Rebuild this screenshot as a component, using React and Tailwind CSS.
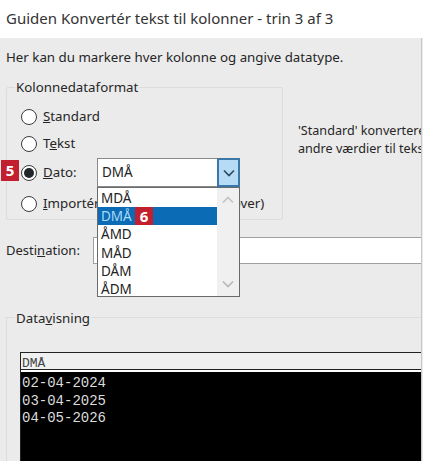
import React from 'react';

const Radio = ({ checked = false }) => (
  <div className="w-[16px] h-[16px] rounded-full border border-[#3a3a3a] bg-white flex items-center justify-center shrink-0">
    {checked && <div className="w-[10px] h-[10px] rounded-full bg-[#22262a]" />}
  </div>
);

const Badge = ({ children, className = '' }) => (
  <div className={`absolute w-[18px] bg-[#c3202f] text-white font-bold text-[15px] text-center ${className}`}>
    {children}
  </div>
);

const Chevron = ({ up = false, color = '#b4b4b4', size = 14 }) => (
  <svg width={size} height={size} viewBox="0 0 14 14" fill="none" stroke={color} strokeWidth="1.7">
    <path d={up ? 'M2 9.5 L7 4.5 L12 9.5' : 'M2 4.5 L7 9.5 L12 4.5'} />
  </svg>
);

const items = ['MDÅ', 'DMÅ', 'ÅMD', 'MÅD', 'DÅM', 'ÅDM'];

const DateCombo = () => (
  <div className="relative w-[143px] h-[29px] ml-[14px] shrink-0 flex border border-[#8a8a8a] bg-white">
    <div className="flex-1 pl-[4px] text-[13.5px] leading-[27px] text-[#222]">DMÅ</div>
    <div className="w-[23px] -my-px -mr-px bg-[#b5dbf5] border-2 border-[#3b78a8] flex items-center justify-center">
      <Chevron color="#2f4a60" />
    </div>
    <div className="absolute z-10 left-[-1px] top-[28px] w-[143px] h-[110px] bg-white border border-[#6a6a6a] flex">
      <div className="w-[119px] pt-[1px]">
        {items.map((item) => (
          <div
            key={item}
            className={`h-[18.2px] pl-[3px] text-[13.5px] leading-[18px] ${item === 'DMÅ' ? 'bg-[#0b6cb5] text-[#a9d8f5]' : 'text-[#222]'}`}
          >
            {item}
          </div>
        ))}
      </div>
      <div className="flex-1 bg-[#f0f0f0] flex flex-col items-center justify-between py-[5px]">
        <Chevron up color="#c4c4c4" />
        <Chevron color="#b8b8b8" />
      </div>
    </div>
  </div>
);

export default function App() {
  return (
    <div className="relative w-[423px] h-[461px] overflow-hidden bg-[#ebebeb] text-[#262626] font-['Noto_Sans','Open_Sans',sans-serif]">
      {/* Title */}
      <div className="h-[38px] bg-white pl-[6px] text-[15px] leading-[37px] text-[#333] whitespace-nowrap">
        Guiden Konvertér tekst til kolonner - trin 3 af 3
      </div>

      <div className="border-r border-[#c8c8c8] mr-[1px] h-[423px] overflow-hidden">
        <div className="pl-[6px] pt-[9px] text-[13.3px] leading-[20px] whitespace-nowrap">
          Her kan du markere hver kolonne og angive datatype.
        </div>

        <div className="flex mt-[10px]">
          {/* Column format group */}
          <div className="relative shrink-0 ml-[6px] mt-[10px] w-[277px] h-[133px] border border-[#dcdcdc] rounded-[2px] pl-[14px] pt-[15px]">
            <div className="absolute left-[8px] top-[-10px] px-[1px] bg-[#ebebeb] text-[13.3px] leading-[18px] whitespace-nowrap">
              Kolonnedataformat
            </div>
            <div className="h-[28px] flex items-center gap-[6px] text-[13.3px]">
              <Radio />
              <span><u>S</u>tandard</span>
            </div>
            <div className="h-[26px] flex items-center gap-[6px] text-[13.3px]">
              <Radio />
              <span>T<u>e</u>kst</span>
            </div>
            <div className="h-[31px] flex items-center gap-[6px] text-[13.3px]">
              <Radio checked />
              <span className="w-[34px]"><u>D</u>ato:</span>
              <DateCombo />
            </div>
            <div className="h-[32px] flex items-center gap-[6px] text-[13.3px] whitespace-nowrap">
              <Radio />
              <span><u>I</u>mportér ikke kolonne (spring over)</span>
            </div>
          </div>

          {/* Description */}
          <div className="ml-[15px] mt-[45px] text-[12.6px] leading-[18px] whitespace-nowrap">
            <div>'Standard' konverterer numeriske værdier til tal</div>
            <div>andre værdier til tekst.</div>
          </div>
        </div>

        {/* Destination */}
        <div className="flex items-center mt-[17px] pl-[6px]">
          <span className="w-[87px] text-[13px]">Desti<u>n</u>ation:</span>
          <div className="flex-1 h-[27px] bg-white border-y border-l border-[#a0a0a0]" />
        </div>

        {/* Preview */}
        <div className="relative ml-[6px] mt-[53px] h-[200px] border-t border-l border-[#dcdcdc] pl-[13px] pt-[34px]">
          <div className="absolute left-[8px] top-[-9px] px-[1px] bg-[#ebebeb] text-[13.3px] leading-[18px]">
            Data<u>v</u>isning
          </div>
          <div className="border-t border-l border-[#222] font-['Liberation_Mono',monospace]">
            <div className="h-[17px] bg-[#f0f0f0] border-b border-[#222] text-[13px] leading-[21px] pl-px text-[#444] overflow-hidden">DMÅ</div>
            <div className="bg-black border-t-2 border-white text-[#dcdcdc] text-[14px] leading-[17.5px] pl-px pt-[3px] h-[100px]">
              <div>02-04-2024</div>
              <div>03-04-2025</div>
              <div>04-05-2026</div>
            </div>
          </div>
        </div>
      </div>

      <Badge className="left-[1px] top-[160px] h-[21px] leading-[21px]">5</Badge>
      <Badge className="left-[135px] top-[207px] h-[18px] leading-[18px] z-20">6</Badge>
    </div>
  );
}
